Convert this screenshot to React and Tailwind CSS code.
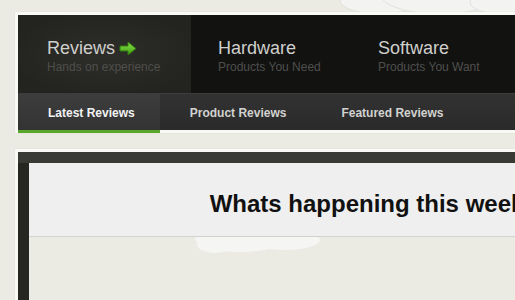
import React from "react";

const topItems = [
  { title: "Reviews", sub: "Hands on experience", active: true, w: "w-[173px]" },
  { title: "Hardware", sub: "Products You Need", w: "w-[160px]" },
  { title: "Software", sub: "Products You Want", w: "w-[160px]" },
  { title: "", sub: "", w: "w-[160px]" },
];

const subItems = ["Latest Reviews", "Product Reviews", "Featured Reviews"];

function Arrow() {
  return (
    <svg width="18" height="15" viewBox="0 0 18 15" className="ml-[4px] mt-[1px]">
      <defs>
        <linearGradient id="ag" x1="0" y1="0" x2="0" y2="1">
          <stop offset="0" stopColor="#8be04a" />
          <stop offset="1" stopColor="#3f9d14" />
        </linearGradient>
      </defs>
      <path d="M1 5 H9 V1 L17 7.5 L9 14 V10 H1 Z" fill="url(#ag)" stroke="#2f7d0e" strokeWidth="1" strokeLinejoin="round" />
    </svg>
  );
}

export default function App() {
  return (
    <div
      className="relative w-[515px] h-[300px] overflow-hidden bg-[#ebeae3]"
      style={{ fontFamily: '"Liberation Sans", Arial, sans-serif' }}
    >
      <svg className="absolute left-0 top-0" width="515" height="300" viewBox="0 0 515 300">
        <g fill="#f3f4f1" stroke="#e2e3dd" strokeWidth="1">
          <ellipse cx="380" cy="0" rx="40" ry="14" />
          <ellipse cx="440" cy="-6" rx="60" ry="20" />
          <ellipse cx="500" cy="2" rx="30" ry="12" />
        </g>
        <g fill="#f5f6f4">
          <ellipse cx="240" cy="238" rx="45" ry="14" />
          <ellipse cx="285" cy="240" rx="35" ry="10" />
          <ellipse cx="215" cy="244" rx="18" ry="9" />
        </g>
      </svg>

      <div className="relative pl-[15px] pt-[12px] w-[708px]">
        {/* Header frame */}
        <div className="border-x-[3px] border-t-[3px] border-[#f9f9f6] shadow-[0_0_1px_#cfcfc6]">
          <div className="flex h-[78px] bg-[#121211]">
            {topItems.map((it, i) => (
              <div
                key={i}
                className={`${it.w} shrink-0 flex flex-col ${i === 0 ? "pl-[29px] bg-[radial-gradient(ellipse_at_center,#2d2d29_0%,#23231f_80%)]" : "pl-[27px]"} pt-[22px]`}
              >
                <div className="flex items-center text-[18px] leading-[22px] text-[#cfcfcc]">
                  {it.title}
                  {it.active && <Arrow />}
                </div>
                <div className="text-[12px] leading-[14px] text-[#4f4f4c] mt-[1px]">{it.sub}</div>
              </div>
            ))}
          </div>
          <div className="flex h-[37px] pt-[1px] border-t border-[#3c3c3c] bg-[linear-gradient(#323232,#2a2a2a)]">
            {subItems.map((s, i) => (
              <div
                key={s}
                className={`flex items-center -mt-[1px] pt-[1px] pl-[30px] pr-[25px] text-[12px] font-bold ${i === 0 ? "bg-[linear-gradient(#3d3d3d,#333333)] text-[#f2f2f2]" : "text-[#d2d2d0]"}`}
              >
                {s}
              </div>
            ))}
          </div>
          <div className="flex h-[3px] bg-[#f9f9f6]">
            <div className="w-[142px] bg-[#5aa62a]" />
          </div>
        </div>

        {/* Content frame */}
        <div className="mt-[16px] border-[3px] border-[#f9f9f6] shadow-[0_0_1px_#cfcfc6]">
          <div className="h-[11px] bg-[#3a3a34]" />
          <div className="flex h-[200px]">
            <div className="w-[11px] shrink-0 bg-[#272722]" />
            <div className="flex-1">
              <div className="h-[74px] bg-[#efefef] border-b border-[#d2d2d0] pt-[27px] text-center">
                <h1 className="text-[24px] leading-[28px] font-bold text-[#111]">Whats happening this week</h1>
              </div>
            </div>
          </div>
        </div>
      </div>
    </div>
  );
}
